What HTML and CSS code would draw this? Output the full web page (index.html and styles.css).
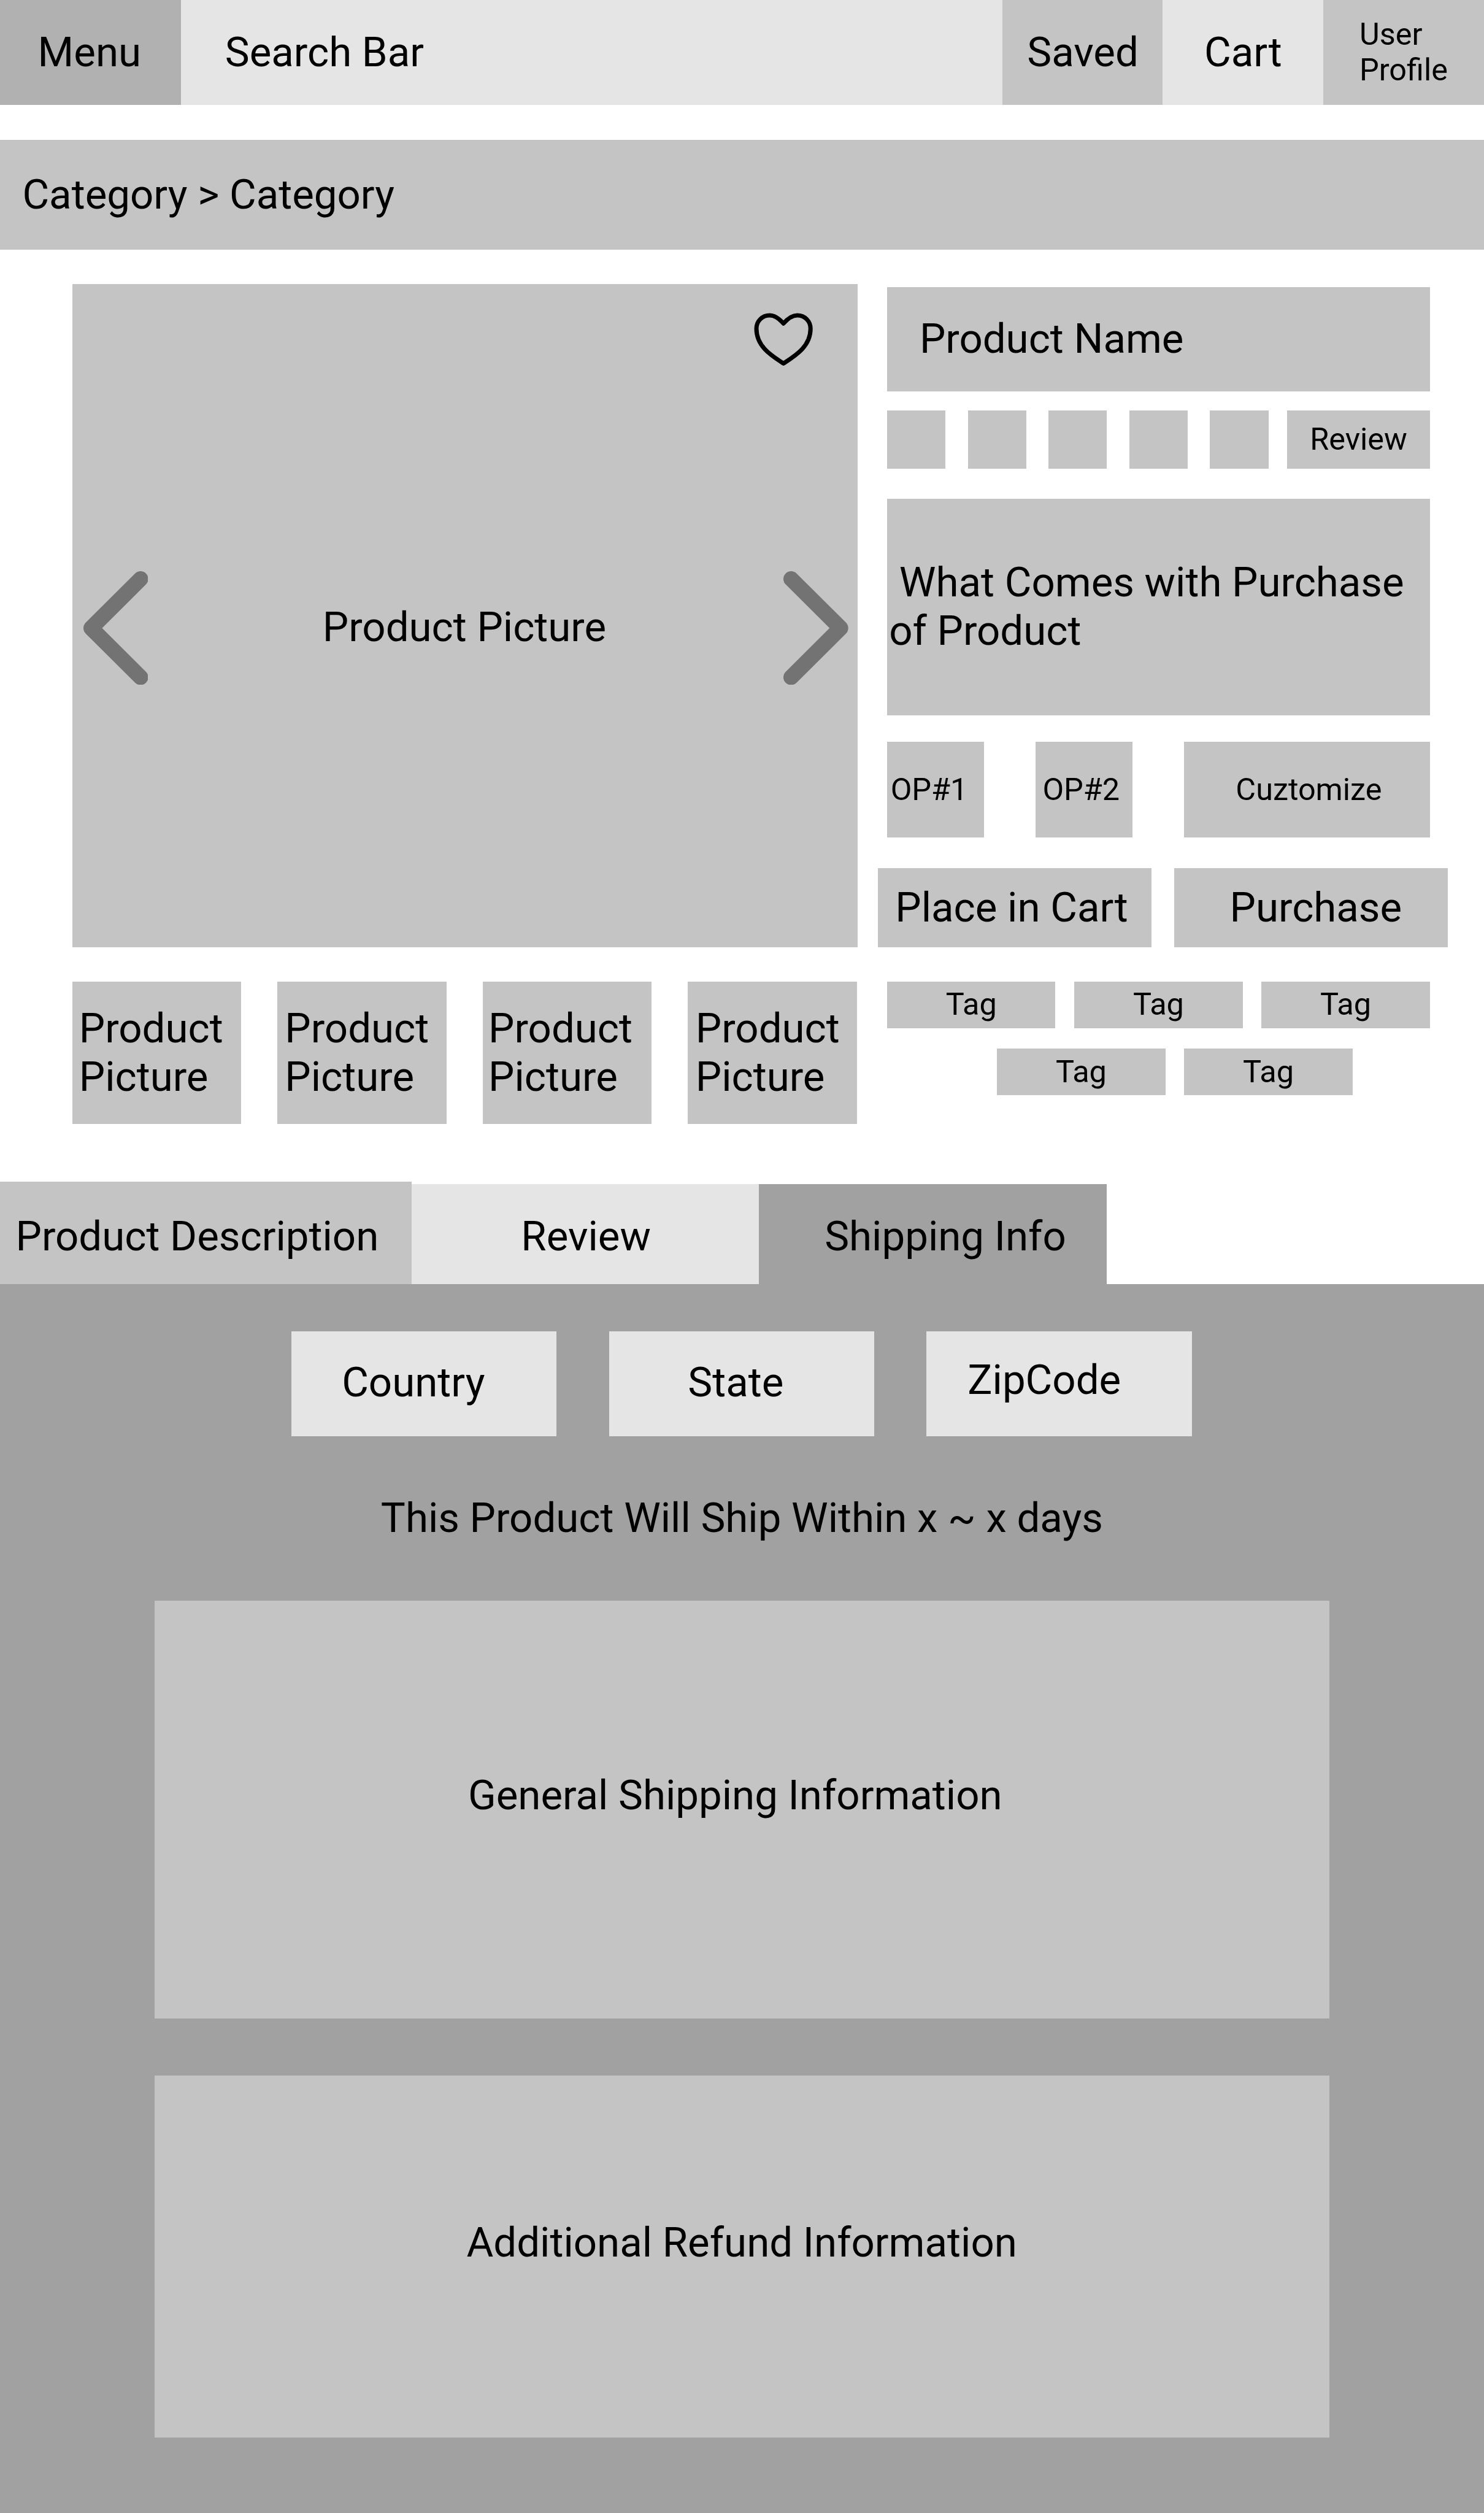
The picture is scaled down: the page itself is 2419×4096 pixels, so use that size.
FILE: index.html
```html
<!DOCTYPE html>
<html lang="en">
<head>
  <meta charset="utf-8">
  <title>Product page</title>
  <link rel="stylesheet" href="styles.css">
</head>
<body>
  <header class="topbar">
    <a class="topbar-menu">Menu</a>
    <div class="topbar-search">Search Bar</div>
    <a class="topbar-link topbar-saved">Saved</a>
    <a class="topbar-link topbar-cart">Cart</a>
    <a class="topbar-link topbar-user">User<br>Profile</a>
  </header>

  <nav class="breadcrumb">Category &gt; Category</nav>

  <main class="product">
    <section class="gallery">
      <div class="picture">
        <svg class="heart" viewBox="0 0 146 132">
          <path d="M73 29C66 21 55 10 41 10C23 10 10 24 10 41C10 82 44 103 73 122C102 103 136 82 136 41C136 24 123 10 105 10C91 10 80 21 73 29Z"/>
        </svg>
        <svg class="chevron" viewBox="0 0 151 265"><path d="M133 18L18 132.500L133 247"/></svg>
        <span class="picture-label">Product Picture</span>
        <svg class="chevron" viewBox="0 0 151 265"><path d="M18 18L133 132.500L18 247"/></svg>
      </div>
      <div class="thumbs">
        <div class="thumb">Product<br>Picture</div>
        <div class="thumb thumb-second">Product<br>Picture</div>
        <div class="thumb thumb-third">Product<br>Picture</div>
        <div class="thumb thumb-fourth">Product<br>Picture</div>
      </div>
    </section>

    <section class="details">
      <h1 class="name">Product Name</h1>
      <div class="rating">
        <i class="star"></i><i class="star"></i><i class="star"></i><i class="star"></i><i class="star"></i>
        <a class="rating-link">Review</a>
      </div>
      <p class="contents">&nbsp;What Comes with Purchase<br>of Product</p>
      <div class="options">
        <div class="option">OP#1</div>
        <div class="option option-second">OP#2</div>
        <div class="customize">Cuztomize</div>
      </div>
      <div class="actions">
        <div class="action action-cart">Place in Cart</div>
        <div class="action action-buy">Purchase</div>
      </div>
      <div class="tags">
        <span class="tag">Tag</span><span class="tag">Tag</span><span class="tag">Tag</span>
      </div>
      <div class="tags tags-second">
        <span class="tag">Tag</span><span class="tag">Tag</span>
      </div>
    </section>
  </main>

  <nav class="tabs">
    <a class="tab tab-description">Product Description</a>
    <a class="tab tab-review">Review</a>
    <a class="tab tab-shipping">Shipping Info</a>
  </nav>

  <section class="shipping">
    <div class="fields">
      <div class="field field-country">Country</div>
      <div class="field field-state">State</div>
      <div class="field field-zip">ZipCode</div>
    </div>
    <p class="estimate">This Product Will Ship Within x ~ x days</p>
    <div class="panel panel-general">General Shipping Information</div>
    <div class="panel panel-refund">Additional Refund Information</div>
  </section>
</body>
</html>
```
FILE: styles.css
```css
/* 1rem = 100 design pixels */
html {
  font-size: 69.994px;
}

* {
  box-sizing: border-box;
}

body {
  margin: 0;
  height: 58.52rem;
  overflow: hidden;
  display: flex;
  flex-direction: column;
  background: #fff;
  color: #000;
  font-family: Roboto, sans-serif;
  font-size: 0.96rem;
  line-height: 1.125rem;
  white-space: nowrap;
}

h1,
p {
  margin: 0;
  font-size: inherit;
  font-weight: 400;
}

/* Top bar */
.topbar {
  display: flex;
  height: 2.44rem;
}

.topbar > * {
  display: flex;
  align-items: center;
}

.topbar-menu {
  width: 4.22rem;
  padding-left: 0.88rem;
  background: #b1b1b1;
}

.topbar-search {
  flex: 1;
  padding-left: 1.02rem;
  background: #e5e5e5;
}

.topbar-link {
  width: 3.74rem;
  background: #c4c4c4;
}

.topbar-saved {
  padding-left: 0.58rem;
}

.topbar-cart {
  padding-left: 0.965rem;
  background: #e5e5e5;
}

.topbar-user {
  padding-left: 0.84rem;
  font-size: 0.72rem;
  line-height: 0.84rem;
}

.breadcrumb {
  display: flex;
  align-items: center;
  height: 2.56rem;
  margin-top: 0.82rem;
  padding: 0 0 0.02rem 0.52rem;
  background: #c4c4c4;
}

/* Product */
.product {
  display: grid;
  grid-template-columns: 18.3rem 12.64rem;
  column-gap: 0.68rem;
  height: 21.7rem;
  padding: 0.8rem 0 0 1.68rem;
}

.picture {
  position: relative;
  display: flex;
  align-items: center;
  justify-content: space-between;
  height: 15.44rem;
  padding: 0.56rem 0.22rem 0 0.26rem;
  background: #c4c4c4;
}

.picture-label {
  margin: 0 0.07rem 0.02rem 0;
}

.chevron {
  width: 1.51rem;
  height: 2.65rem;
  fill: none;
  stroke: #737373;
  stroke-width: 36;
  stroke-linecap: round;
  stroke-linejoin: round;
}

.heart {
  position: absolute;
  top: 0.62rem;
  right: 1rem;
  width: 1.46rem;
  height: 1.32rem;
  fill: none;
  stroke: #000;
  stroke-width: 10;
  stroke-linejoin: round;
}

.thumbs {
  display: flex;
  gap: 0.84rem;
  margin-top: 0.8rem;
}

.thumb {
  display: flex;
  align-items: center;
  width: 3.94rem;
  height: 3.32rem;
  padding-left: 0.16rem;
  background: #c4c4c4;
}

.thumb-second {
  padding-left: 0.175rem;
}

.thumb-third {
  padding-left: 0.135rem;
}

.thumb-fourth {
  padding-left: 0.18rem;
}

.details {
  padding-top: 0.06rem;
}

.name {
  display: flex;
  align-items: center;
  height: 2.44rem;
  padding: 0 0 0.02rem 0.755rem;
  background: #c4c4c4;
}

.rating {
  display: flex;
  gap: 0.52rem;
  height: 1.36rem;
  margin-top: 0.44rem;
}

.star {
  width: 1.36rem;
  background: #c4c4c4;
}

.rating-link {
  display: flex;
  align-items: center;
  justify-content: center;
  width: 3.32rem;
  margin-left: -0.08rem;
  background: #c4c4c4;
  font-size: 0.72rem;
}

.contents {
  display: flex;
  align-items: center;
  height: 5.04rem;
  margin-top: 0.7rem;
  padding: 0 0 0.02rem 0.045rem;
  background: #c4c4c4;
}

.options {
  display: flex;
  gap: 1.2rem;
  height: 2.22rem;
  margin-top: 0.62rem;
  font-size: 0.72rem;
}

.option,
.customize {
  display: flex;
  align-items: center;
  width: 2.26rem;
  padding-left: 0.08rem;
  background: #c4c4c4;
}

.option-second {
  padding-left: 0.16rem;
}

.customize {
  flex: 1;
  padding-left: 1.2rem;
}

.actions {
  display: flex;
  gap: 0.52rem;
  height: 1.84rem;
  margin: 0.72rem -0.42rem 0 -0.22rem;
}

.action {
  display: flex;
  align-items: center;
  width: 6.38rem;
  padding-bottom: 0.02rem;
  background: #c4c4c4;
}

.action-cart {
  padding-left: 0.41rem;
}

.action-buy {
  padding-left: 1.3rem;
}

.tags {
  display: flex;
  gap: 0.44rem;
  margin-top: 0.8rem;
}

.tags-second {
  margin-top: 0.48rem;
  padding-left: 2.56rem;
}

.tag {
  display: flex;
  align-items: center;
  justify-content: center;
  width: 3.92rem;
  height: 1.08rem;
  background: #c4c4c4;
  font-size: 0.72rem;
}

/* Tabs */
.tabs {
  display: flex;
  align-items: flex-end;
  height: 2.38rem;
}

.tab {
  display: flex;
  align-items: center;
  width: 8.1rem;
  height: 2.32rem;
  padding-top: 0.1rem;
}

.tab-description {
  width: 9.58rem;
  height: 2.38rem;
  padding: 0.16rem 0 0 0.365rem;
  background: #c4c4c4;
}

.tab-review {
  padding-left: 2.555rem;
  background: #e5e5e5;
}

.tab-shipping {
  padding-left: 1.525rem;
  background: #a1a1a1;
}

/* Shipping tab content */
.shipping {
  flex: 1;
  padding: 1.1rem 3.6rem 0;
  background: #a1a1a1;
}

.fields {
  display: flex;
  gap: 1.22rem;
  padding-left: 3.18rem;
}

.field {
  display: flex;
  align-items: center;
  width: 6.18rem;
  height: 2.44rem;
  padding-bottom: 0.05rem;
  background: #e5e5e5;
}

.field-country {
  padding-left: 1.18rem;
}

.field-state {
  padding-left: 1.84rem;
}

.field-zip {
  padding: 0 0 0.16rem 0.955rem;
}

.estimate {
  margin-top: 1.35rem;
  padding-left: 5.27rem;
}

.panel {
  padding-left: 7.28rem;
  background: #c4c4c4;
}

.panel-general {
  height: 9.72rem;
  margin-top: 1.365rem;
  padding: 3.97rem 0 0 7.3rem;
}

.panel-refund {
  height: 8.42rem;
  margin-top: 1.34rem;
  padding: 3.32rem 0 0 7.265rem;
}
```
